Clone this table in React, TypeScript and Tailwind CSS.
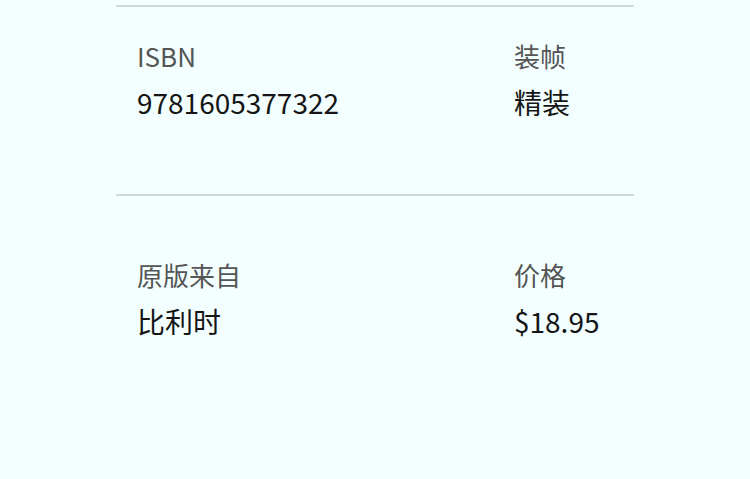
const rows = [
  {
    pad: "pt-[31px] pb-[73px]",
    left: { label: "ISBN", value: "9781605377322" },
    right: { label: "装帧", value: "精装" },
  },
  {
    pad: "pt-[61px] pb-[60px]",
    left: { label: "原版来自", value: "比利时" },
    right: { label: "价格", value: "$18.95" },
  },
];

const Field = ({ label, value }: { label: string; value: string }) => (
  <div>
    <div className="text-[26px] leading-[36px] text-[#555]">{label}</div>
    <div className="mt-[9px] text-[28px] leading-[38px] text-[#151515]">{value}</div>
  </div>
);

export default function App() {
  return (
    <div
      className="min-h-[479px] bg-[#f3ffff]"
      style={{ fontFamily: '"Noto Sans CJK SC", "Noto Sans", sans-serif' }}
    >
      <div className="mx-[116px] pt-[5px]">
        {rows.map((r, i) => (
          <div key={i} className={`border-t-2 border-[#d3d7d7] px-[21px] ${r.pad} flex`}>
            <div className="w-[377px]">
              <Field {...r.left} />
            </div>
            <Field {...r.right} />
          </div>
        ))}
      </div>
    </div>
  );
}
